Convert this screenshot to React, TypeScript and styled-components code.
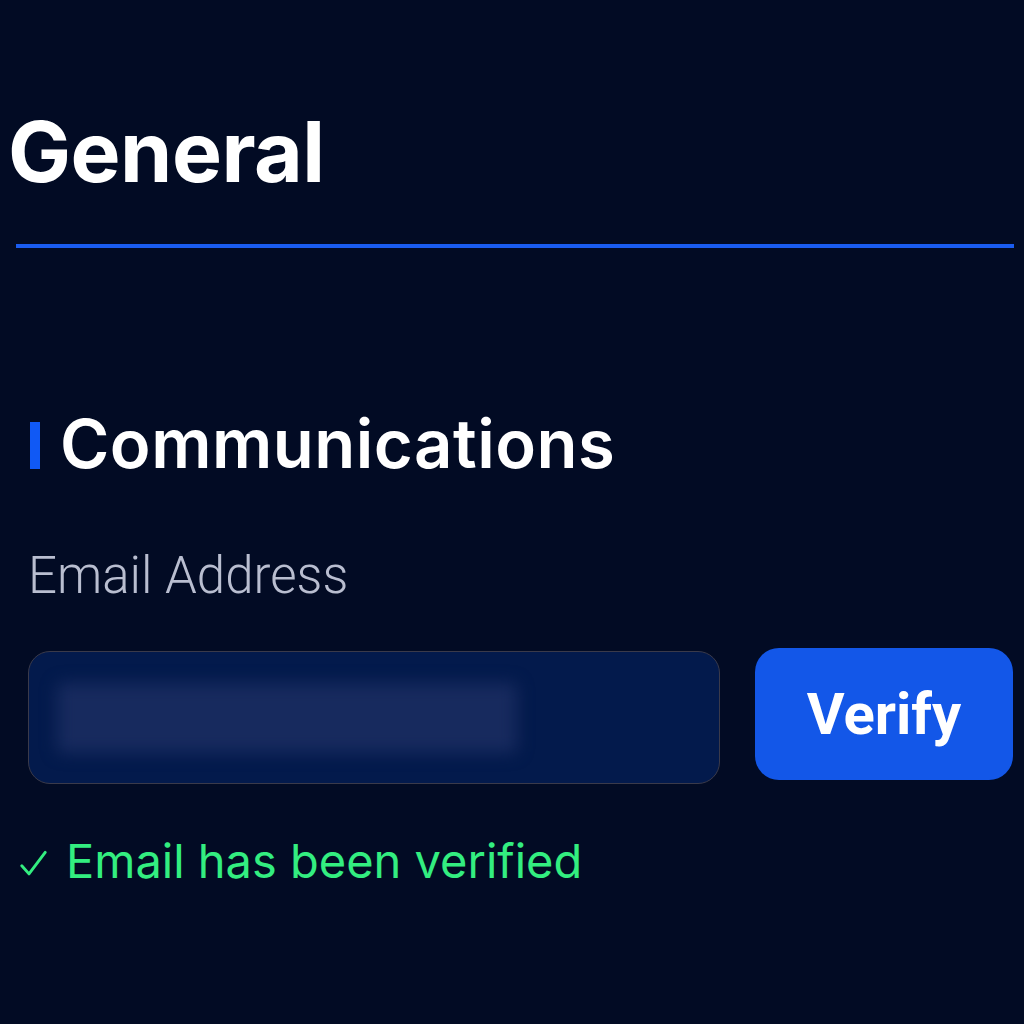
import React from "react";
import styled, { createGlobalStyle } from "styled-components";

const Global = createGlobalStyle`
  html, body { margin: 0; padding: 0; background: #020b24; }
  body { font-family: Inter, "Noto Sans", sans-serif; }
`;

const Page = styled.div`
  width: 1024px;
  height: 1024px;
  background: #020b24;
  box-sizing: border-box;
  padding: 100px 10px 0 8px;
  display: flex;
  flex-direction: column;
  overflow: hidden;
`;

const Title = styled.h1`
  margin: 0;
  font-family: Inter, sans-serif;
  font-weight: 700;
  font-size: 84px;
  line-height: 104px;
  color: #ffffff;
  letter-spacing: -0.5px;
`;

const Rule = styled.div`
  height: 4px;
  margin: 40px 0 0 8px;
  background: #1a5cf0;
`;

const Section = styled.section`
  display: flex;
  flex-direction: column;
  padding: 151px 0 0 20px;
`;

const SectionTitle = styled.h2`
  margin: 0;
  display: flex;
  align-items: center;
  gap: 20px;
  font-family: Inter, sans-serif;
  font-weight: 600;
  font-size: 67px;
  line-height: 90px;
  letter-spacing: 0.5px;
  color: #ffffff;
  &::before {
    content: "";
    width: 10px;
    height: 47px;
    margin-left: 2px;
    margin-top: 2px;
    background: #1059f5;
  }
`;

const Label = styled.label`
  margin-top: 52px;
  font-family: Roboto, sans-serif;
  font-weight: 300;
  font-size: 51px;
  line-height: 70px;
  color: #b9bed0;
`;

const Row = styled.div`
  margin-top: 40px;
  display: flex;
  align-items: center;
  gap: 35px;
`;

const Field = styled.div`
  width: 692px;
  height: 133px;
  box-sizing: border-box;
  border-radius: 22px;
  border: 1.5px solid #3a3a4a;
  background: #031a4c;
  display: flex;
  align-items: center;
  padding-left: 28px;
`;

const Blurred = styled.div`
  width: 460px;
  height: 70px;
  background: #172a5e;
  filter: blur(8px);
  border-radius: 6px;
`;

const Button = styled.button`
  width: 258px;
  height: 132px;
  margin-top: -8px;
  border: none;
  border-radius: 24px;
  background: #1357e8;
  color: #ffffff;
  font-family: Roboto, sans-serif;
  font-weight: 700;
  font-size: 58px;
  cursor: pointer;
`;

const Status = styled.div`
  margin: 42px 0 0 -8px;
  display: flex;
  align-items: center;
  gap: 19px;
  font-family: Inter, sans-serif;
  font-weight: 400;
  font-size: 47px;
  line-height: 70px;
  color: #33ee80;
`;

const Check = styled.svg`
  width: 27px;
  height: 28px;
  margin-top: 6px;
`;

export default function App() {
  return (
    <>
      <Global />
      <Page>
        <Title>General</Title>
        <Rule />
        <Section>
          <SectionTitle>Communications</SectionTitle>
          <Label>Email Address</Label>
          <Row>
            <Field>
              <Blurred />
            </Field>
            <Button>Verify</Button>
          </Row>
          <Status>
            <Check viewBox="0 0 30 30" fill="none">
              <path d="M2 17 L10 26 L28 2" stroke="#33ee80" strokeWidth="3.2" strokeLinecap="round" strokeLinejoin="round" />
            </Check>
            Email has been verified
          </Status>
        </Section>
      </Page>
    </>
  );
}
